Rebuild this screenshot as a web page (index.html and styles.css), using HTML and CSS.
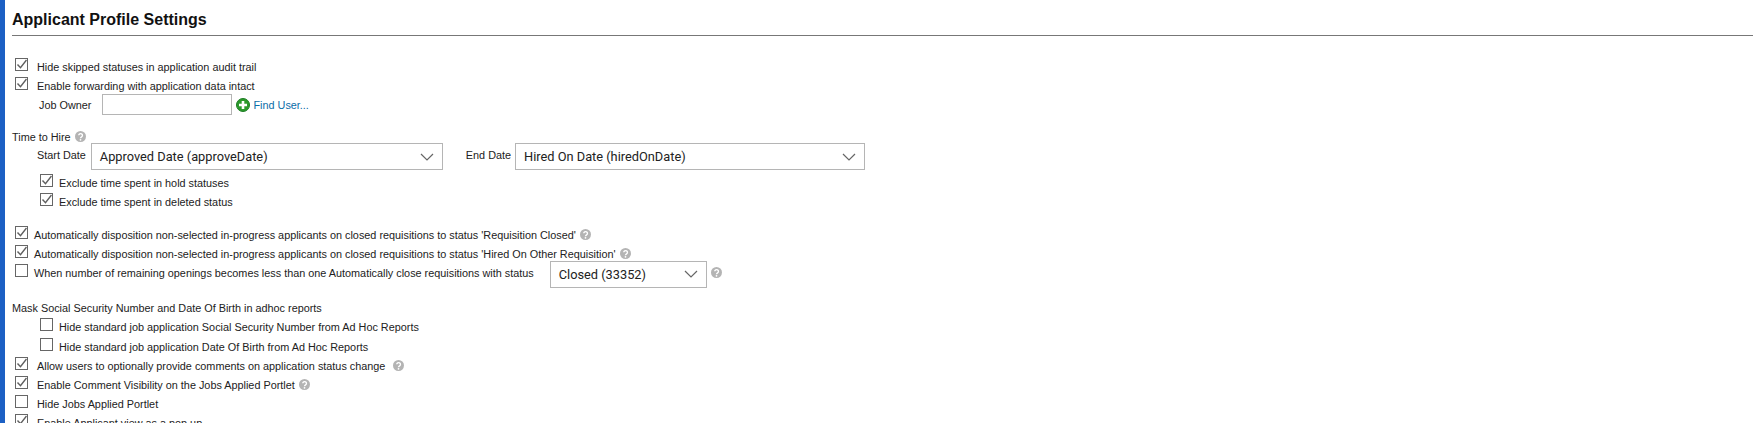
FILE: index.html
```html
<!DOCTYPE html>
<html lang="en">
<head>
    <meta charset="UTF-8">
    <title>Applicant Profile Settings</title>
    <link rel="stylesheet" href="styles.css">
</head>
<body>
    <svg width="0" height="0" class="defs">
        <symbol id="help" viewBox="0 0 10 10">
            <circle cx="5" cy="5" r="5" fill="#b4b4b4"/>
            <path d="M3.4 3.9a1.7 1.6 0 1 1 2.6 1.4c-.7.4-1 .6-1 1.2" fill="none" stroke="#fff" stroke-width="1.2"/>
            <circle cx="5" cy="8" r=".8" fill="#fff"/>
        </symbol>
        <symbol id="tick" viewBox="0 0 11 11">
            <path d="M1.5 5.5l3 3.2 6-7.7" fill="none" stroke="#5f5f5f" stroke-width="1.4"/>
        </symbol>
        <symbol id="arrow" viewBox="0 0 14 8">
            <path d="M1 1l6 6 6-6" fill="none" stroke="#666" stroke-width="1.2"/>
        </symbol>
    </svg>

    <div class="page">
        <h1>Applicant Profile Settings</h1>

        <div class="row"><span class="box on"><svg><use href="#tick"/></svg></span><span class="label">Hide skipped statuses in application audit trail</span></div>
        <div class="row"><span class="box on"><svg><use href="#tick"/></svg></span><span class="label">Enable forwarding with application data intact</span></div>
        <div class="row owner">
            <span class="owner-label">Job Owner</span>
            <input type="text" class="owner-input">
            <svg class="add-icon" viewBox="0 0 14 14">
                <circle cx="7" cy="7" r="6.5" fill="#2c9a2c" stroke="#1d7d24"/>
                <path d="M7 3v8M3 7h8" stroke="#fff" stroke-width="2.6"/>
            </svg>
            <a href="#" class="find-user">Find User...</a>
        </div>

        <div class="heading hire">Time to Hire <svg class="help"><use href="#help"/></svg></div>
        <div class="dates">
            <span class="date-label">Start Date</span>
            <div class="select start">Approved Date (approveDate)<svg class="chevron"><use href="#arrow"/></svg></div>
            <span class="date-label end-label">End Date</span>
            <div class="select end">Hired On Date (hiredOnDate)<svg class="chevron"><use href="#arrow"/></svg></div>
        </div>
        <div class="row sub first-sub"><span class="box on"><svg><use href="#tick"/></svg></span><span class="label">Exclude time spent in hold statuses</span></div>
        <div class="row sub"><span class="box on"><svg><use href="#tick"/></svg></span><span class="label">Exclude time spent in deleted status</span></div>

        <div class="row tight group"><span class="box on"><svg><use href="#tick"/></svg></span><span class="label">Automatically disposition non-selected in-progress applicants on closed requisitions to status 'Requisition Closed'</span><svg class="help"><use href="#help"/></svg></div>
        <div class="row tight"><span class="box on"><svg><use href="#tick"/></svg></span><span class="label">Automatically disposition non-selected in-progress applicants on closed requisitions to status 'Hired On Other Requisition'</span><svg class="help"><use href="#help"/></svg></div>
        <div class="row tight"><span class="box"></span><span class="label">When number of remaining openings becomes less than one Automatically close requisitions with status</span>
            <div class="select closed">Closed (33352)<svg class="chevron"><use href="#arrow"/></svg></div>
            <svg class="help"><use href="#help"/></svg>
        </div>

        <div class="heading mask">Mask Social Security Number and Date Of Birth in adhoc reports</div>
        <div class="row sub"><span class="box"></span><span class="label">Hide standard job application Social Security Number from Ad Hoc Reports</span></div>
        <div class="row sub second-sub"><span class="box"></span><span class="label">Hide standard job application Date Of Birth from Ad Hoc Reports</span></div>
        <div class="row"><span class="box on"><svg><use href="#tick"/></svg></span><span class="label">Allow users to optionally provide comments on application status change</span><svg class="help wide"><use href="#help"/></svg></div>
        <div class="row"><span class="box on"><svg><use href="#tick"/></svg></span><span class="label">Enable Comment Visibility on the Jobs Applied Portlet</span><svg class="help"><use href="#help"/></svg></div>
        <div class="row"><span class="box"></span><span class="label">Hide Jobs Applied Portlet</span></div>
        <div class="row"><span class="box on"><svg><use href="#tick"/></svg></span><span class="label">Enable Applicant view as a pop up</span></div>
    </div>
</body>
</html>
```

FILE: styles.css
```css
html, body {
    margin: 0;
    height: 423px;
    overflow: hidden;
    background: white;
}
body {
    font-family: "Liberation Sans", Arial, sans-serif;
    font-size: 10.85px;
    color: #222;
    border-left: 5px solid #1c60c4;
}
.defs {
    position: absolute;
}
.page {
    padding-left: 7px;
}
h1 {
    margin: 0 0 21px;
    height: 35px;
    line-height: 40px;
    font-size: 16px;
    color: #111;
    border-bottom: 1px solid #777;
}
.row {
    display: flex;
    align-items: center;
    height: 19px;
    padding-left: 3px;
}
.box {
    box-sizing: border-box;
    width: 13px;
    height: 13px;
    margin-top: -4px;
    border: 1px solid #666;
    background: white;
    flex: none;
}
.box svg {
    display: block;
    width: 11px;
    height: 11px;
}
.label {
    margin-left: 9px;
}
.tight .label {
    margin-left: 6px;
}
.owner {
    padding-left: 27px;
}
.owner-input {
    box-sizing: border-box;
    width: 130px;
    height: 21px;
    margin: 0 0 0 11px;
    border: 1px solid #b5b5b5;
    padding: 0;
}
.add-icon {
    width: 14px;
    height: 14px;
    margin-left: 4px;
}
.find-user {
    margin-left: 3px;
    color: #0b6ea8;
    text-decoration: none;
}
.heading {
    display: flex;
    align-items: center;
    height: 13px;
}
.hire {
    margin-top: 16px;
}
.help {
    width: 11px;
    height: 11px;
    margin-left: 4px;
    flex: none;
}
.help.wide {
    margin-left: 8px;
}
.dates {
    display: flex;
    align-items: center;
    padding-left: 25px;
}
.date-label {
    margin-top: -3px;
}
.select {
    box-sizing: border-box;
    display: flex;
    align-items: center;
    justify-content: space-between;
    height: 27px;
    padding: 0 8px;
    border: 1px solid #b5b5b5;
    font-family: Roboto, "Liberation Sans", sans-serif;
    font-size: 12.8px;
    color: #222;
    flex: none;
}
.start {
    width: 352px;
    margin-left: 5px;
}
.end-label {
    margin-left: 23px;
}
.end {
    width: 350px;
    margin-left: 4px;
}
.closed {
    width: 157px;
    margin: 3px 0 0 16px;
}
.chevron {
    width: 14px;
    height: 8px;
}
.sub {
    padding-left: 28px;
}
.sub .label {
    margin-left: 6px;
}
.first-sub {
    margin-top: 3px;
}
.second-sub {
    margin-top: 1px;
}
.group {
    margin-top: 14px;
}
.mask {
    height: 19px;
    margin-top: 16px;
}
```
